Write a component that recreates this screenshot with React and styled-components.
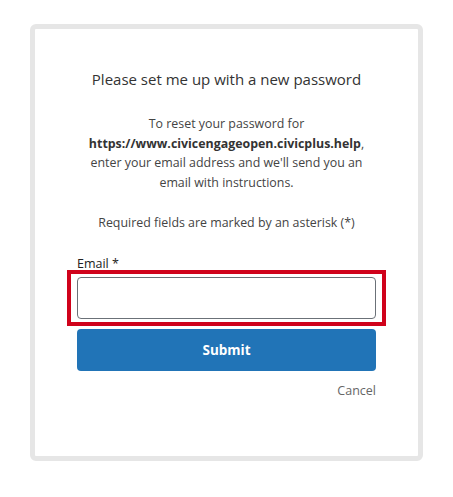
import styled, { createGlobalStyle } from "styled-components";

const GlobalStyle = createGlobalStyle`
  html, body {
    margin: 0;
    padding: 0;
    background: #ffffff;
  }
  body {
    font-family: "Open Sans", "Noto Sans", "Liberation Sans", sans-serif;
    color: #333333;
  }
`

const Page = styled.main`
  padding: 24px 30px 36px;
`

const Card = styled.section`
  border: 5px solid #e6e6e6;
  border-radius: 6px;
  background: #ffffff;
  height: 427px;
  box-sizing: content-box;
  padding: 0 42px;
  display: flex;
  flex-direction: column;
`

const Title = styled.h1`
  margin: 40px 0 0;
  font-size: 15px;
  font-weight: 400;
  line-height: 20px;
  text-align: center;
  color: #333333;
`

const Intro = styled.p`
  margin: 25px 0 0;
  font-size: 12.4px;
  line-height: 19.5px;
  text-align: center;
  color: #444444;

  & > strong {
    font-weight: 700;
    color: #333333;
  }
`

const Required = styled.p`
  margin: 21px 0 0;
  font-size: 12.4px;
  line-height: 19.5px;
  text-align: center;
  color: #444444;
`

const Label = styled.label`
  margin-top: 24px;
  font-size: 12.5px;
  font-weight: 500;
  line-height: 14px;
  color: #222222;
`

const FocusRing = styled.div`
  margin: -1px -10px 0;
  border: 4px solid #d0021b;
  padding: 3px 6px;
`

const Input = styled.input`
  display: block;
  box-sizing: border-box;
  width: 100%;
  height: 42px;
  border: 1px solid #6b7178;
  border-radius: 4px;
  background: #ffffff;
  outline: none;
  padding: 0 10px;
  font: inherit;
`

const SubmitButton = styled.button`
  margin-top: 3px;
  height: 42px;
  border: none;
  border-radius: 4px;
  background: #2174b7;
  color: #ffffff;
  font-family: inherit;
  font-size: 13.5px;
  font-weight: 700;
  cursor: pointer;
`

const CancelLink = styled.a`
  align-self: flex-end;
  margin-top: 12px;
  font-size: 12.5px;
  line-height: 16px;
  color: #666666;
  text-decoration: none;
  cursor: pointer;
`

export default function App() {
  return (
    <>
      <GlobalStyle />
      <Page>
        <Card>
          <Title>Please set me up with a new password</Title>
          <Intro>
            To reset your password for
            <br />
            <strong>https://www.civicengageopen.civicplus.help</strong>,
            <br />
            enter your email address and we'll send you an email with
            instructions.
          </Intro>
          <Required>Required fields are marked by an asterisk (*)</Required>
          <Label htmlFor="email">Email *</Label>
          <FocusRing>
            <Input id="email" type="email" />
          </FocusRing>
          <SubmitButton type="button">Submit</SubmitButton>
          <CancelLink>Cancel</CancelLink>
        </Card>
      </Page>
    </>
  )
}
